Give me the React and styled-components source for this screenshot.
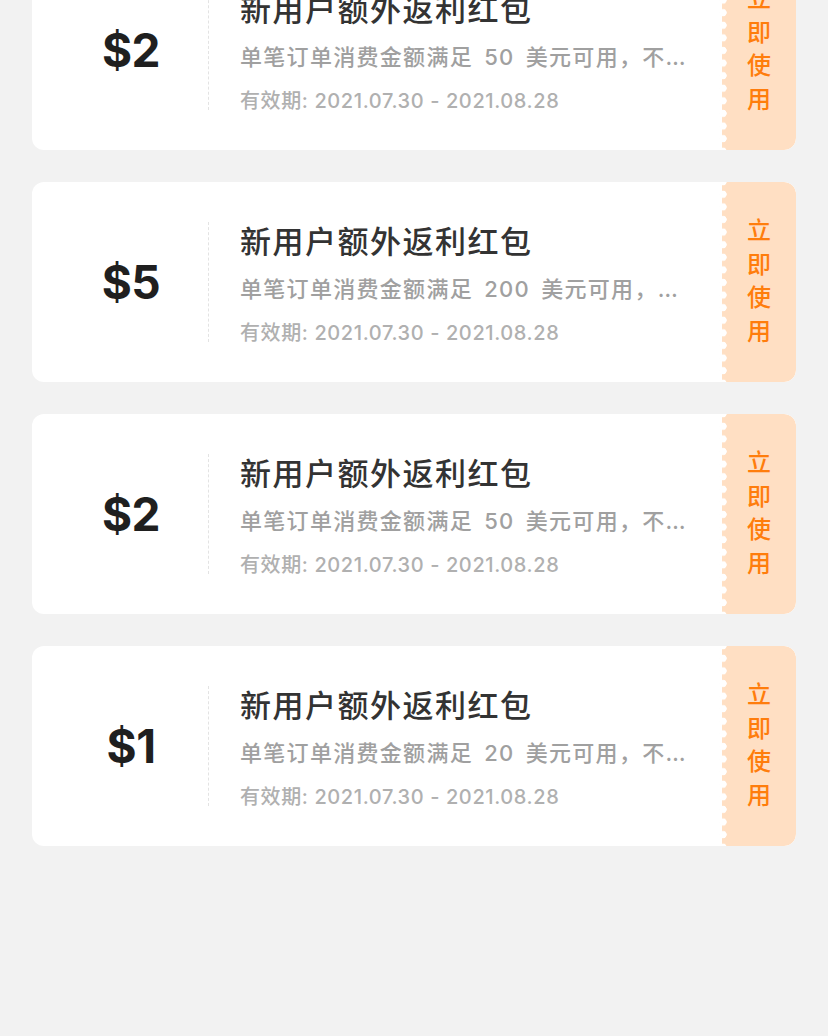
import React from "react";
import styled, { createGlobalStyle } from "styled-components";

const Global = createGlobalStyle`
  html, body { margin: 0; padding: 0; background: #f2f2f2; }
  body { font-family: Inter, "Noto Sans CJK SC", sans-serif; overflow: hidden; }
`;

const Page = styled.div`
  width: 828px;
  height: 1036px;
  overflow: hidden;
  background: #f2f2f2;
`;

const List = styled.div`
  display: flex;
  flex-direction: column;
  gap: 32px;
  padding: 0 32px;
  margin-top: -50px;
`;

const Card = styled.div`
  display: flex;
  height: 200px;
  background: #fff;
  border-radius: 12px;
  overflow: hidden;
`;

const Amount = styled.div`
  width: 176px;
  flex: none;
  box-sizing: border-box;
  padding-left: 22px;
  display: flex;
  align-items: center;
  justify-content: center;
  font-family: Inter, "Liberation Sans", sans-serif;
  font-weight: 700;
  font-size: 46px;
  color: #1f1f1f;
  letter-spacing: -0.5px;
`;

const Divider = styled.div`
  flex: none;
  width: 0;
  margin: 40px 0;
  border-left: 1.5px dashed #e3e3e3;
`;

const Info = styled.div`
  flex: 1;
  min-width: 0;
  padding: 2px 25px 0 31px;
  display: flex;
  flex-direction: column;
  justify-content: center;
`;

const Title = styled.div`
  font-family: "Noto Sans CJK SC", sans-serif;
  font-size: 31px;
  line-height: 40px;
  font-weight: 500;
  color: #333;
  letter-spacing: 1.5px;
  white-space: nowrap;
`;

const Desc = styled.div`
  margin-top: 13px;
  font-family: Inter, "Noto Sans CJK SC", sans-serif;
  font-size: 22px;
  line-height: 32px;
  font-weight: 500;
  color: #a0a0a0;
  white-space: nowrap;
  overflow: hidden;
  text-overflow: ellipsis;
  letter-spacing: 1.3px;
  word-spacing: 4px;
`;

const DateLine = styled.div`
  margin-top: 15px;
  font-family: Inter, "Noto Sans CJK SC", sans-serif;
  font-size: 20px;
  line-height: 26px;
  font-weight: 500;
  color: #b0b0b0;
  letter-spacing: 0.6px;
  white-space: nowrap;
`;

const Tab = styled.div`
  position: relative;
  flex: none;
  width: 74px;
  padding-bottom: 6px;
  box-sizing: border-box;
  background: #ffdfc3;
  border-radius: 0 12px 12px 0;
  display: flex;
  flex-direction: column;
  align-items: center;
  justify-content: center;
  font-family: "Noto Sans CJK SC", sans-serif;
  font-size: 24px;
  font-weight: 500;
  color: #ff7d0c;
  &::before {
    content: "";
    position: absolute;
    left: -3px;
    top: 0;
    bottom: 0;
    width: 8px;
    background: radial-gradient(circle at 4px 50%, #fff 3.4px, transparent 4px);
    background-size: 8px 12.6px;
    background-position: 0 6px;
    background-repeat: repeat-y;
  }
`;

const TabChar = styled.span`
  line-height: 33.5px;
`;

const coupons = [
  { amount: "$2", min: 50 },
  { amount: "$5", min: 200 },
  { amount: "$2", min: 50 },
  { amount: "$1", min: 20 },
];

export default function App() {
  return (
    <Page>
      <Global />
      <List>
        {coupons.map((c, i) => (
          <Card key={i}>
            <Amount>{c.amount}</Amount>
            <Divider />
            <Info>
              <Title>新用户额外返利红包</Title>
              <Desc>单笔订单消费金额满足 {c.min} 美元可用，不可与其他优惠同时使用</Desc>
              <DateLine>有效期: 2021.07.30 - 2021.08.28</DateLine>
            </Info>
            <Tab>
              {"立即使用".split("").map((ch) => (
                <TabChar key={ch}>{ch}</TabChar>
              ))}
            </Tab>
          </Card>
        ))}
      </List>
    </Page>
  );
}
